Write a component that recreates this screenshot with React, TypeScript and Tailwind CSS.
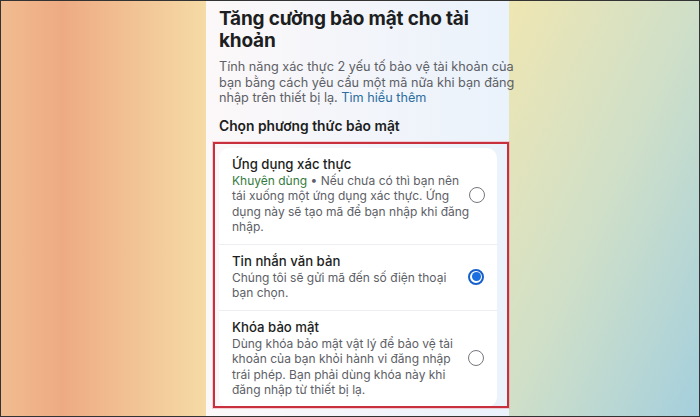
import React from 'react';

type Option = {
    title: string;
    lines: React.ReactNode[];
    selected?: boolean;
};

const options: Option[] = [
    {
        title: 'Ứng dụng xác thực',
        lines: [
            <><span className="text-[#357a3d]">Khuyên dùng</span> • Nếu chưa có thì bạn nên</>,
            'tái xuống một ứng dụng xác thực. Ứng',
            'dụng này sẽ tạo mã để bạn nhập khi đăng',
            'nhập.',
        ],
    },
    {
        title: 'Tin nhắn văn bản',
        lines: ['Chúng tôi sẽ gửi mã đến số điện thoại', 'bạn chọn.'],
        selected: true,
    },
    {
        title: 'Khóa bảo mật',
        lines: [
            'Dùng khóa bảo mật vật lý để bảo vệ tài',
            'khoản của bạn khỏi hành vi đăng nhập',
            'trái phép. Bạn phải dùng khóa này khi',
            'đăng nhập từ thiết bị lạ.',
        ],
    },
];

const Radio: React.FC<{ selected?: boolean }> = ({ selected }) =>
    selected ? (
        <div className="shrink-0 w-[16px] h-[16px] rounded-full border-2 border-[#1660cc] flex items-center justify-center">
            <div className="w-[9px] h-[9px] rounded-full bg-[#1b6fe0]" />
        </div>
    ) : (
        <div className="shrink-0 w-[16px] h-[16px] rounded-full border-[1.5px] border-[#74777c]" />
    );

export default function App() {
    return (
        <div className="w-[700px] h-[417px] border border-[#333333] flex overflow-hidden font-['Inter','Noto_Sans',sans-serif]">
            <div className="w-[205px] h-full bg-linear-to-r from-[#f1bb90] via-[#eeab83] via-30% to-[#f5dba6]" />

            <div className="relative w-[303px] h-full bg-linear-to-r from-[#fcf8f9] to-[#eaf2fb] pl-[13px] pr-[12px] pt-[7px]">
                <h1 className="text-[19px] leading-[22px] font-bold text-[#1c1e21] tracking-[-0.2px]">
                    <span className="block">Tăng cường bảo mật cho tài</span>
                    <span className="block">khoản</span>
                </h1>
                <p className="mt-[7px] text-[12.7px] leading-[15.5px] text-[#5d6066] whitespace-nowrap">
                    Tính năng xác thực 2 yếu tố bảo vệ tài khoản của
                    <br />
                    bạn bằng cách yêu cầu một mã nữa khi bạn đăng
                    <br />
                    nhập trên thiết bị lạ. <span className="text-[#2b6e9f]">Tìm hiểu thêm</span>
                </p>
                <h2 className="mt-[12px] text-[13.8px] leading-[17px] font-semibold text-[#1c1e21]">
                    Chọn phương thức bảo mật
                </h2>

                <div className="mt-[13px] bg-white rounded-[10px] overflow-hidden">
                    {options.map((opt, i) => (
                        <div
                            key={opt.title}
                            className={`flex items-center justify-between pl-[13px] pr-[13px] pt-[8px] pb-[9px] ${i > 0 ? 'border-t border-[#eceef1]' : ''}`}
                        >
                            <div className="whitespace-nowrap">
                                <div className="text-[13.2px] leading-[17px] font-medium text-[#1c1e21]">{opt.title}</div>
                                {opt.lines.map((line, j) => (
                                    <div key={j} className="text-[12px] leading-[15.5px] text-[#5d6066]">
                                        {line}
                                    </div>
                                ))}
                            </div>
                            <Radio selected={opt.selected} />
                        </div>
                    ))}
                </div>

                <div className="absolute left-[7px] top-[141px] w-[296px] h-[266px] border-2 border-[#c9303d] shadow-[0_0_0_1px_rgba(235,130,140,0.35)] pointer-events-none" />
            </div>

            <div className="flex-1 h-full bg-linear-to-br from-[#efe6b2] via-[#cfdfc8] to-[#a4cfdd]" />
        </div>
    );
}
